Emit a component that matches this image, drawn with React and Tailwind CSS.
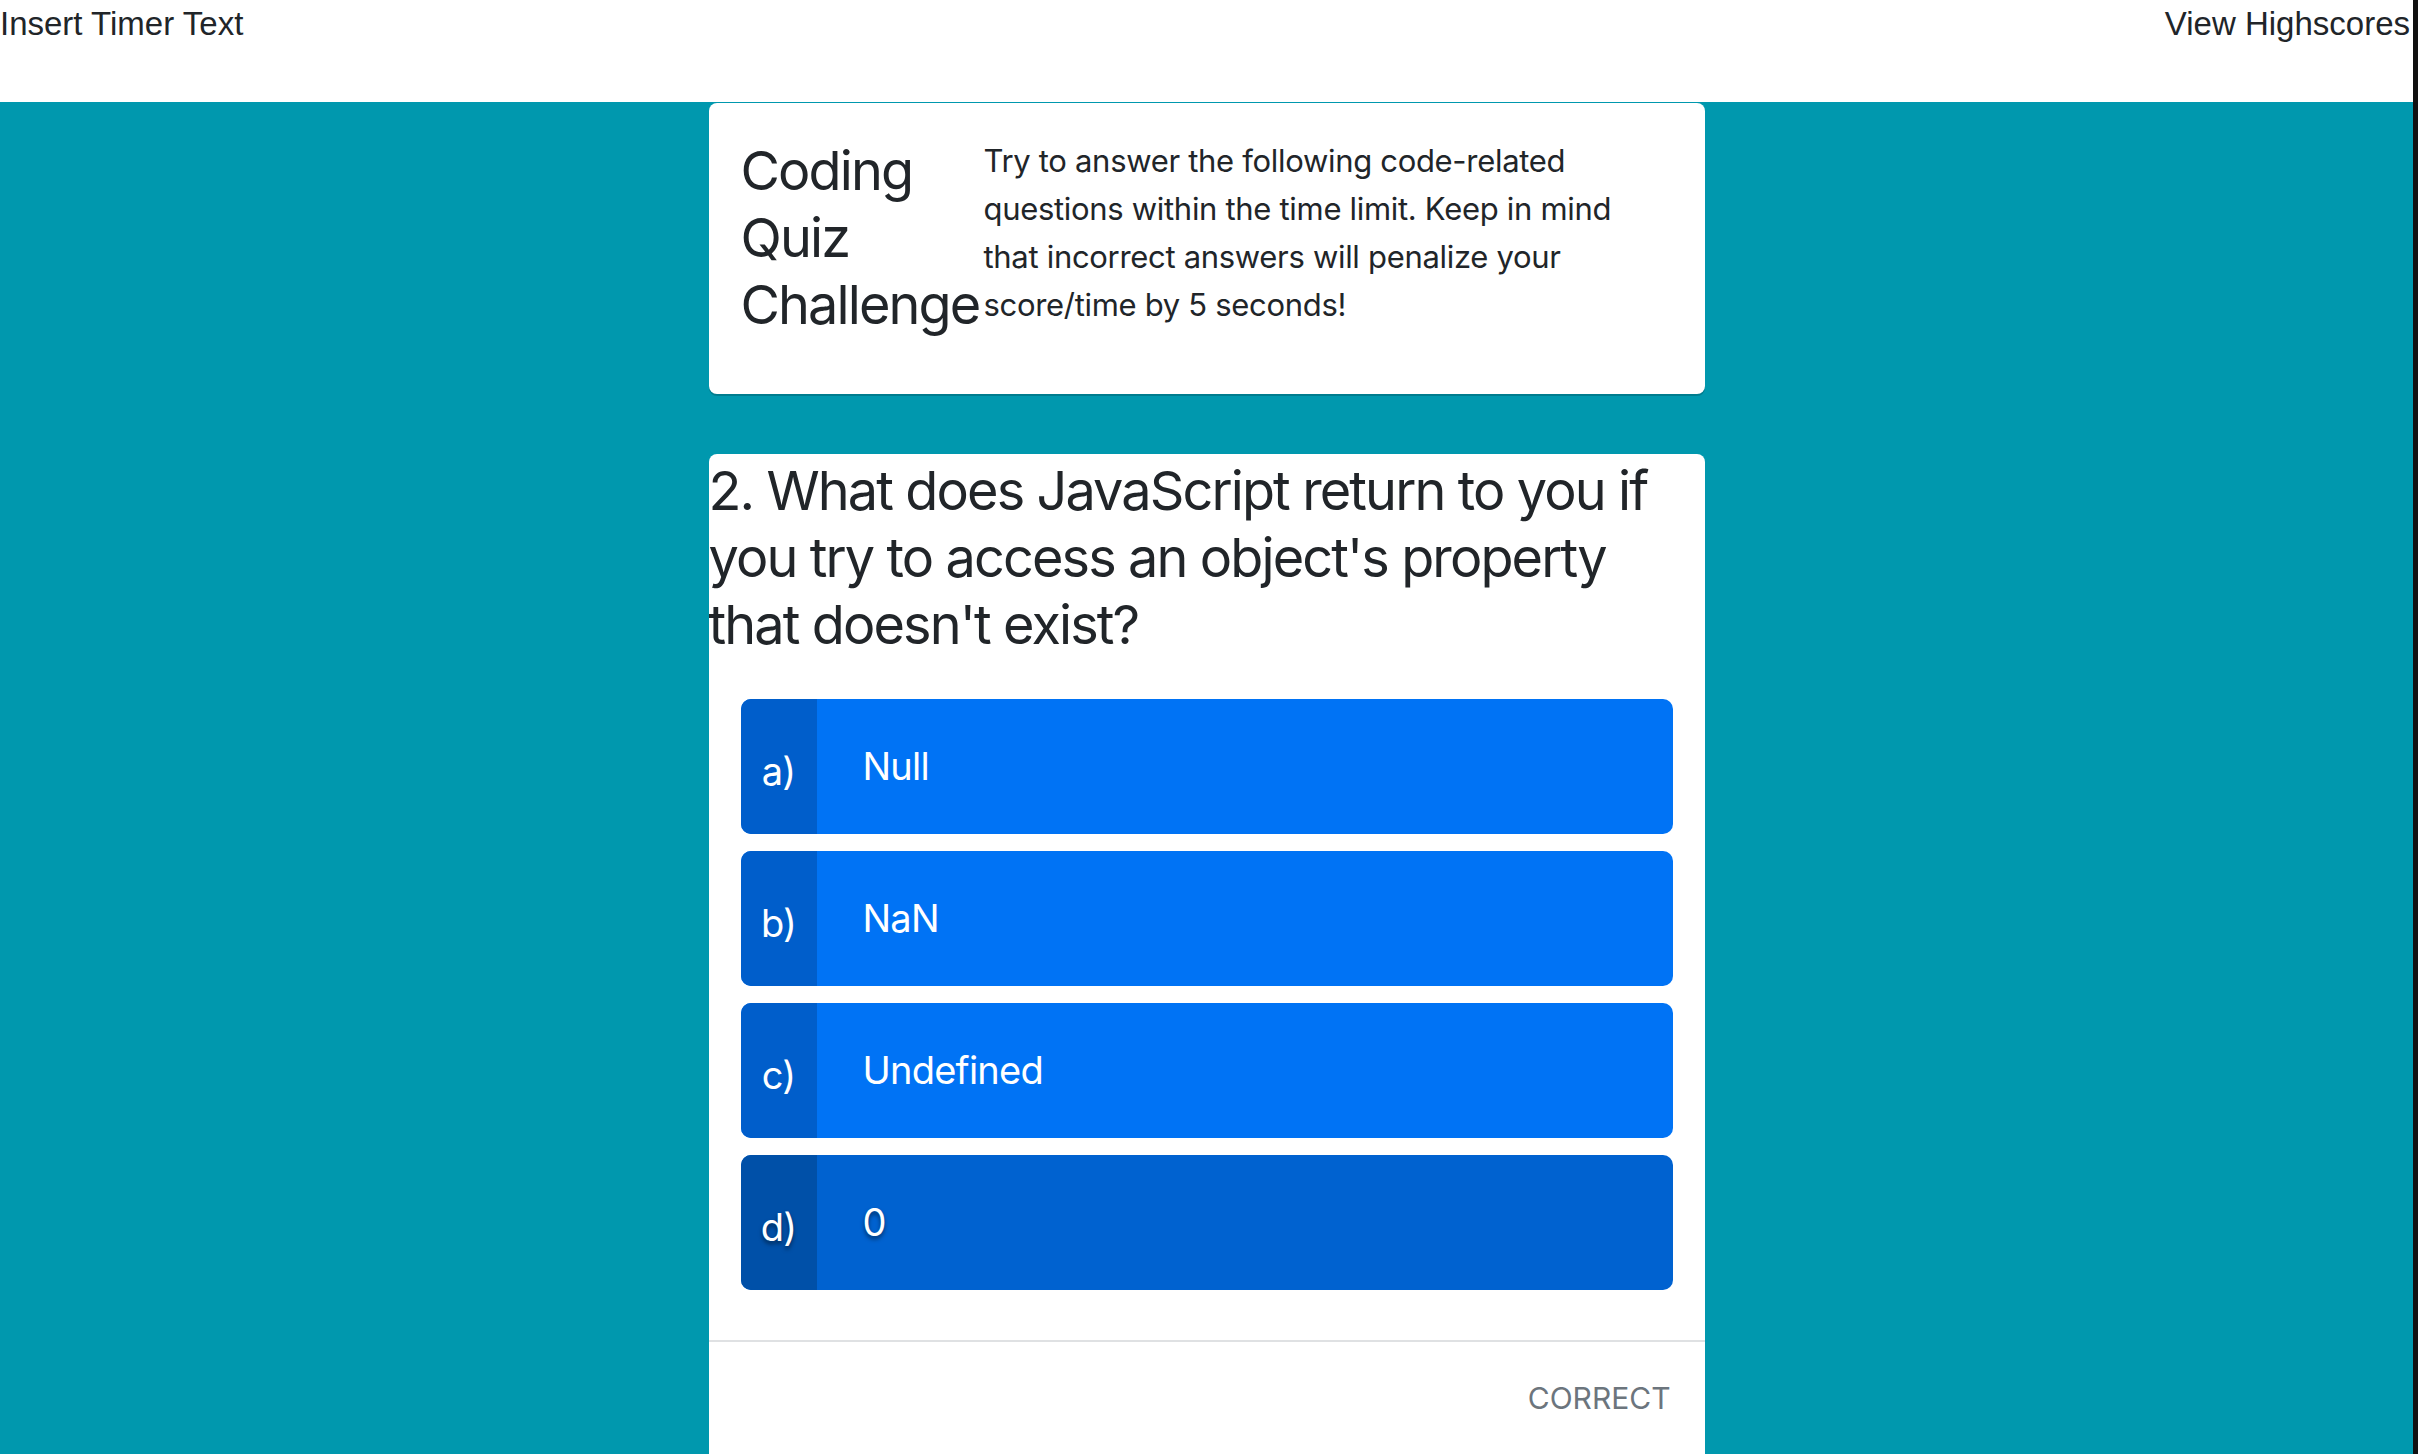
const answers = [
  { key: "a)", text: "Null", active: false },
  { key: "b)", text: "NaN", active: false },
  { key: "c)", text: "Undefined", active: false },
  { key: "d)", text: "0", active: true },
];

function AnswerButton({ item }) {
  const shadow = item.active ? "[text-shadow:0_3px_4px_rgba(0,0,0,0.5)]" : "";
  return (
    <button
      type="button"
      className={`flex h-[135px] w-full items-stretch overflow-hidden rounded-[10px] text-left text-white ${item.active ? "bg-[#0062d0]" : "bg-[#0073f5]"}`}
    >
      <span
        className={`flex w-[76px] shrink-0 items-center justify-center pt-[10px] text-[38px] tracking-[-0.02em] ${item.active ? "bg-[#0050a8]" : "bg-[#005ecb]"} ${shadow}`}
      >
        {item.key}
      </span>
      <span className={`flex items-center pl-[46px] text-[38px] tracking-[-0.02em] ${shadow}`}>{item.text}</span>
    </button>
  );
}

export default function App() {
  return (
    <div className="flex h-[1454px] w-full overflow-hidden bg-black font-['Inter',sans-serif] text-[#212529]">
      <div className="flex w-[2413px] shrink-0 flex-col">
        <header className="flex h-[102px] shrink-0 items-start justify-between bg-white pr-[3px] font-['Liberation_Sans',Arial,sans-serif] text-[33px] leading-[48px]">
          <span>Insert Timer Text</span>
          <span>View Highscores</span>
        </header>

        <main className="flex flex-1 flex-col items-center bg-[#0098ae] pt-px">
          <section className="flex w-[996px] items-start rounded-[8px] bg-white pt-[34px] pb-[56px] pl-[32px] pr-[42px] shadow-[0_2px_0_rgba(0,0,0,0.18)]">
            <h3 className="w-[241px] shrink-0 text-[54px] leading-[67px] tracking-[-0.035em]">Coding Quiz Challenge</h3>
            <p className="pl-[2px] text-[31px] leading-[48px] tracking-[-0.01em]">
              Try to answer the following code-related questions within the time limit. Keep in mind that incorrect
              answers will penalize your score/time by 5 seconds!
            </p>
          </section>

          <section className="mt-[60px] flex w-[996px] flex-col rounded-[8px] bg-white">
            <h3 className="pt-[3px] text-[54px] leading-[67px] tracking-[-0.035em]">
              2. What does JavaScript return to you if you try to access an object's property that doesn't exist?
            </h3>
            <div className="mt-[41px] flex flex-col gap-[17px] px-[32px] pb-[50px]">
              {answers.map((a) => (
                <AnswerButton key={a.key} item={a} />
              ))}
            </div>
            <footer className="flex justify-end border-t-2 border-[#dfe1e3] px-[34px] pt-[34px] pb-[40px] text-[30px] leading-[45px] text-[#6c757d]">
              CORRECT
            </footer>
          </section>
        </main>
      </div>
      <div className="flex-1 bg-[#111]" />
    </div>
  );
}
